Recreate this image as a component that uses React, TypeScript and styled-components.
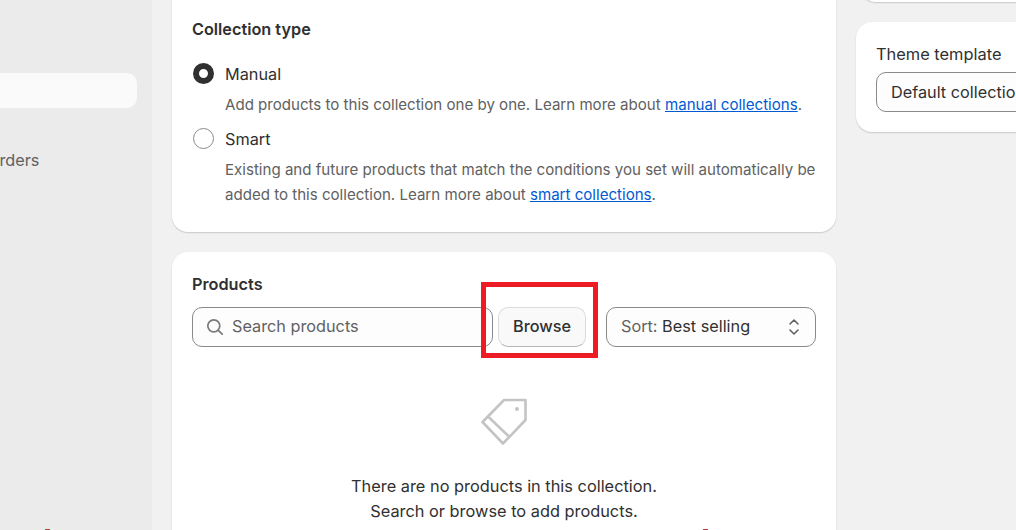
import React from "react";
import styled, {createGlobalStyle} from "styled-components";

const GlobalStyle = createGlobalStyle`
    html, body {
        margin: 0;
        padding: 0;
        background: #f1f1f1;
    }

    body {
        font-family: Inter, "Liberation Sans", sans-serif;
        color: #303030;
        -webkit-font-smoothing: antialiased;
    }
`;

const Shell = styled.div`
    position: relative;
    display: flex;
    width: 1016px;
    height: 530px;
    overflow: hidden;
    background: #f1f1f1;
`;

const Sidebar = styled.nav`
    flex: 0 0 152px;
    box-sizing: border-box;
    padding: 73px 15px 0 0;
    background: #ebebeb;
    overflow: hidden;
`;

const ActiveItem = styled.div`
    height: 35px;
    border-radius: 10px;
    margin-left: -20px;
    background: #fafafa;
`;

const NavItem = styled.div`
    margin: 40px 0 0 -13px;
    font-size: 16.25px;
    line-height: 25px;
    color: #616161;
`;

const Main = styled.main`
    display: flex;
    flex: 1;
    gap: 20px;
    padding-left: 20px;
    min-width: 0;
`;

const MainColumn = styled.div`
    flex: 0 0 664px;
    display: flex;
    flex-direction: column;
    gap: 20px;
`;

const SideColumn = styled.div`
    flex: 0 0 200px;
    display: flex;
    flex-direction: column;
    gap: 20px;
    margin-top: -60px;
`;

const Card = styled.section`
    flex-shrink: 0;
    box-sizing: border-box;
    background: #fff;
    border-radius: 16px;
    padding: 20px;
    box-shadow: 0 1px 0 0 rgba(26, 26, 26, 0.07), 0 1px 2px 0 rgba(26, 26, 26, 0.12);
`;

const TypeCard = styled(Card)`
    height: 252px;
    padding-top: 37px;
    margin-top: -20px;
`;

const ProductsCard = styled(Card)`
    height: 320px;
`;

const SideStub = styled(Card)`
    height: 62px;
    width: 300px;
    margin-left: 4px;
`;

const ThemeCard = styled(Card)`
    width: 300px;
    height: 110px;
`;

const CardTitle = styled.h2`
    margin: 0;
    font-size: 16.25px;
    line-height: 25px;
    font-weight: 600;
`;

const RadioRow = styled.div<{ $top: number }>`
    display: flex;
    align-items: center;
    gap: 11px;
    height: 25px;
    margin-top: ${p => p.$top}px;
    font-size: 16.25px;
`;

const Radio = styled.span<{ $checked?: boolean }>`
    box-sizing: border-box;
    width: 21px;
    height: 21px;
    margin-left: 1px;
    border-radius: 50%;
    background: #fff;
    border: ${p => (p.$checked ? "6px solid #303030" : "1px solid #8a8a8a")};
`;

const Help = styled.p`
    margin: 6px 0 0 33px;
    font-size: 15.08px;
    line-height: 25px;
    color: #616161;

    a {
        color: #005bd3;
        text-decoration: underline;
    }
`;

const Controls = styled.div`
    display: flex;
    height: 40px;
    margin-top: 10px;
`;

const Field = styled.div`
    box-sizing: border-box;
    display: flex;
    align-items: center;
    background: #fdfdfd;
    border: 1px solid #8a8a8a;
    border-radius: 10px;
    font-size: 16.25px;
    color: #616161;
`;

const SearchField = styled(Field)`
    flex: 0 0 301px;
    gap: 8px;
    padding: 0 0 2px 13px;

    svg {
        margin-top: 2px;
    }
`;

const BrowseWrap = styled.div`
    position: relative;
    margin-left: 5px;
`;

const BrowseButton = styled.button`
    box-sizing: border-box;
    width: 88px;
    height: 40px;
    padding: 0 0 2px;
    background: #f9f9f9;
    border: 1px solid #dcdcdc;
    border-bottom-color: #b5b5b5;
    border-radius: 10px;
    font-family: inherit;
    font-size: 16.25px;
    font-weight: 500;
    color: #303030;
`;

const Highlight = styled.div`
    position: absolute;
    left: -17px;
    top: -25px;
    width: 117px;
    height: 76px;
    box-sizing: border-box;
    border: 5px solid #ed1c24;
    pointer-events: none;
`;

const NextHighlight = styled.div`
    position: absolute;
    left: 45px;
    bottom: 0;
    width: 663px;
    height: 1px;
    box-sizing: border-box;
    border-left: 5px solid #c8323a;
    border-right: 5px solid #c8323a;
    pointer-events: none;
`;

const SortField = styled(Field)`
    flex: 0 0 210px;
    margin-left: 20px;
    padding: 0 14px 2px;
    justify-content: space-between;

    svg {
        margin-top: 2px;
    }

    b {
        font-weight: 400;
        color: #303030;
    }
`;

const Empty = styled.div`
    display: flex;
    flex-direction: column;
    align-items: center;
    margin-top: 49px;
    font-size: 16.35px;
    line-height: 25px;
    text-align: center;
`;

const EmptyText = styled.p`
    margin: 28px 0 0;
`;

const ThemeLabel = styled.div`
    font-size: 16.4px;
    line-height: 25px;
`;

const ThemeSelect = styled(Field)`
    height: 40px;
    margin-top: 5px;
    padding-left: 14px;
    color: #303030;
    white-space: nowrap;
`;

const SearchIcon = () => (
    <svg width="18" height="18" viewBox="0 0 18 18" fill="none" stroke="#7a7a7a" strokeWidth="1.7" strokeLinecap="round">
        <circle cx="7.8" cy="7.8" r="6"/>
        <path d="M12.3 12.3 16.2 16.2"/>
    </svg>
);

const UpDownIcon = () => (
    <svg width="14" height="20" viewBox="0 0 14 20" fill="none" stroke="#616161" strokeWidth="1.6" strokeLinecap="round" strokeLinejoin="round">
        <path d="M3 7 7 3 11 7"/>
        <path d="M3 13 7 17 11 13"/>
    </svg>
);

const TagIcon = () => (
    <svg width="50" height="50" viewBox="0 0 50 50" fill="none" stroke="#c4c4c4" strokeWidth="2.6" strokeLinejoin="round">
        <path d="M25 4H46.5V24L24 47.5 3.5 26Z"/>
        <path d="M9 20.5 30.5 41"/>
        <circle cx="38" cy="13" r="2" fill="#c4c4c4" stroke="none"/>
    </svg>
);

export default function App() {
    return (
        <Shell>
            <GlobalStyle/>
            <Sidebar>
                <ActiveItem/>
                <NavItem>Orders</NavItem>
            </Sidebar>
            <Main>
                <MainColumn>
                    <TypeCard>
                        <CardTitle>Collection type</CardTitle>
                        <RadioRow $top={19}>
                            <Radio $checked/>
                            Manual
                        </RadioRow>
                        <Help>
                            Add products to this collection one by one. Learn more about <a href="#manual">manual collections</a>.
                        </Help>
                        <RadioRow $top={9}>
                            <Radio/>
                            Smart
                        </RadioRow>
                        <Help>
                            Existing and future products that match the conditions you set will automatically be
                            added to this collection. Learn more about <a href="#smart">smart collections</a>.
                        </Help>
                    </TypeCard>
                    <ProductsCard>
                        <CardTitle>Products</CardTitle>
                        <Controls>
                            <SearchField>
                                <SearchIcon/>
                                Search products
                            </SearchField>
                            <BrowseWrap>
                                <BrowseButton>Browse</BrowseButton>
                                <Highlight/>
                            </BrowseWrap>
                            <SortField>
                                <span>Sort: <b>Best selling</b></span>
                                <UpDownIcon/>
                            </SortField>
                        </Controls>
                        <Empty>
                            <TagIcon/>
                            <EmptyText>
                                There are no products in this collection.
                                <br/>
                                Search or browse to add products.
                            </EmptyText>
                        </Empty>
                    </ProductsCard>
                </MainColumn>
                <SideColumn>
                    <SideStub/>
                    <ThemeCard>
                        <ThemeLabel>Theme template</ThemeLabel>
                        <ThemeSelect>Default collection</ThemeSelect>
                    </ThemeCard>
                </SideColumn>
            </Main>
            <NextHighlight/>
        </Shell>
    );
}
